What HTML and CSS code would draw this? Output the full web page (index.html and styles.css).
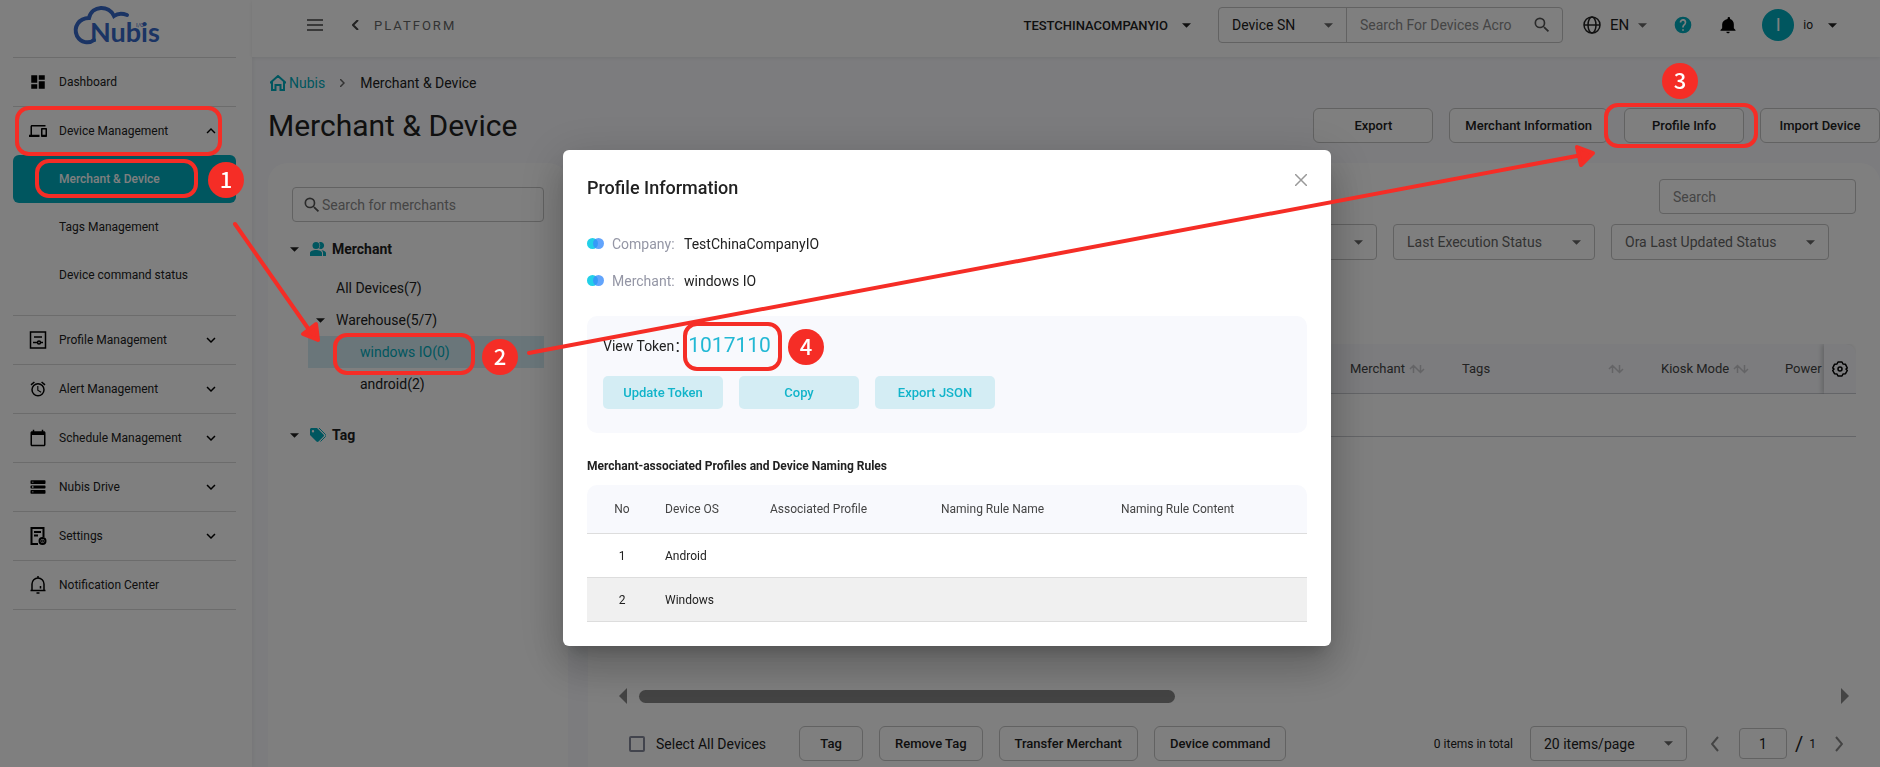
FILE: index.html
```html
<!DOCTYPE html>
<html lang="en">
<head>
    <meta charset="UTF-8">
    <meta name="viewport" content="width=device-width, initial-scale=1.0">
    <title>Nubis - Merchant &amp; Device</title>
    <link rel="stylesheet" href="styles.css">
</head>
<body>
    <!-- shared icons -->
    <svg class="defs" width="0" height="0" aria-hidden="true">
        <symbol id="caret" viewBox="0 0 10 5"><path d="M0 0h10L5 5z"/></symbol>
        <symbol id="chevron-down" viewBox="0 0 24 24"><path d="M7.41 8.59 12 13.17l4.59-4.58L18 10l-6 6-6-6z"/></symbol>
        <symbol id="search" viewBox="0 0 24 24"><path d="M15.5 14h-.79l-.28-.27A6.47 6.47 0 0 0 16 9.5 6.5 6.5 0 1 0 9.5 16c1.61 0 3.09-.59 4.23-1.57l.27.28v.79l5 4.99L20.49 19zm-6 0a4.5 4.5 0 1 1 0-9 4.5 4.5 0 0 1 0 9z"/></symbol>
        <symbol id="sort" viewBox="0 0 16 10"><path d="M4.500 9V1.500M1 5l3.500-3.500L8 5M11.500 1v7.500M8 5l3.500 3.500L15 5" fill="none" stroke="currentColor" stroke-width="1.500"/></symbol>
        <symbol id="circles" viewBox="0 0 17 11"><circle cx="5.500" cy="5.500" r="5.500" fill="#22d0e8"/><circle cx="11.500" cy="5.500" r="5.500" fill="#3b8dfb" fill-opacity=".8"/></symbol>
    </svg>

    <div class="app">
        <aside class="sidebar">
            <div class="logo">
                <svg width="110" height="57" viewBox="0 0 110 57" role="img" aria-label="Nubis I/O">
                    <path d="M33 40C28 44 20 43 16 36 12 27 18 18 28 18 31 5 48 5 53 16c4-3 8-3 13-1" class="logo-cloud"/>
                    <text x="29" y="42" class="logo-name">Nubis</text>
                    <text x="75" y="27" class="logo-io">I/O</text>
                </svg>
            </div>
            <nav>
                <a class="nav-item" href="#">
                    <svg class="nav-icon" viewBox="0 0 24 24"><path d="M3 13h8V3H3zm0 8h8v-6H3zm10 0h8V11h-8zm0-18v6h8V3z"/></svg>
                    <span>Dashboard</span>
                </a>
                <a class="nav-item open" href="#">
                    <svg class="nav-icon" viewBox="0 0 24 24"><path d="M4 6h18V4H4c-1.100 0-2 .9-2 2v11H0v3h14v-3H4zm19 2h-6c-.55 0-1 .45-1 1v10c0 .55.45 1 1 1h6c.55 0 1-.45 1-1V9c0-.55-.45-1-1-1zm-1 9h-4v-7h4z"/></svg>
                    <span>Device Management</span>
                    <svg class="nav-arrow up" viewBox="0 0 24 24"><use href="#chevron-down"/></svg>
                </a>
                <div class="submenu">
                    <a class="active" href="#">Merchant &amp; Device</a>
                    <a href="#">Tags Management</a>
                    <a href="#">Device command status</a>
                </div>
                <a class="nav-item" href="#">
                    <svg class="nav-icon line" viewBox="0 0 18 18"><path d="M1.500 1h15v16h-15zM5 6h8M4 11.500h4M12 11.500h2"/><circle cx="10" cy="11.500" r="1.500"/></svg>
                    <span>Profile Management</span>
                    <svg class="nav-arrow" viewBox="0 0 24 24"><use href="#chevron-down"/></svg>
                </a>
                <a class="nav-item" href="#">
                    <svg class="nav-icon" viewBox="0 0 24 24"><path d="m22 5.720-4.600-3.860-1.290 1.530 4.600 3.860zM7.880 3.390 6.600 1.860 2 5.710l1.290 1.530zM12.500 8H11v6l4.750 2.850.75-1.230-4-2.370zM12 4a9 9 0 1 0 0 18 9 9 0 0 0 0-18zm0 16a7 7 0 1 1 0-14 7 7 0 0 1 0 14z"/></svg>
                    <span>Alert Management</span>
                    <svg class="nav-arrow" viewBox="0 0 24 24"><use href="#chevron-down"/></svg>
                </a>
                <a class="nav-item" href="#">
                    <svg class="nav-icon" viewBox="0 0 24 24"><path d="M20 3h-1V1h-2v2H7V1H5v2H4c-1.100 0-2 .9-2 2v16c0 1.100.9 2 2 2h16c1.100 0 2-.9 2-2V5c0-1.100-.9-2-2-2zm0 18H4V8h16z"/></svg>
                    <span>Schedule Management</span>
                    <svg class="nav-arrow" viewBox="0 0 24 24"><use href="#chevron-down"/></svg>
                </a>
                <a class="nav-item" href="#">
                    <svg class="nav-icon" viewBox="0 0 24 24"><path fill-rule="evenodd" d="M3 3h18a1 1 0 0 1 1 1v3a1 1 0 0 1-1 1H3a1 1 0 0 1-1-1V4a1 1 0 0 1 1-1zm1 2v1h2V5zM3 10h18a1 1 0 0 1 1 1v2a1 1 0 0 1-1 1H3a1 1 0 0 1-1-1v-2a1 1 0 0 1 1-1zm1 1v2h2v-2zM3 16h18a1 1 0 0 1 1 1v3a1 1 0 0 1-1 1H3a1 1 0 0 1-1-1v-3a1 1 0 0 1 1-1zm1 2v1h2v-1z"/></svg>
                    <span>Nubis Drive</span>
                    <svg class="nav-arrow" viewBox="0 0 24 24"><use href="#chevron-down"/></svg>
                </a>
                <a class="nav-item" href="#">
                    <svg class="nav-icon line heavy" viewBox="0 0 18 18"><path d="M9 17H2.500V1h12v9M5 5h7M5 8.500h4"/><circle cx="13.500" cy="14" r="3"/><circle cx="13.500" cy="14" r=".5"/></svg>
                    <span>Settings</span>
                    <svg class="nav-arrow" viewBox="0 0 24 24"><use href="#chevron-down"/></svg>
                </a>
                <a class="nav-item" href="#">
                    <svg class="nav-icon line" viewBox="0 0 18 18"><path d="M1.500 14.500h15M3 14V8a6 6 0 0 1 12 0v6M9 0v2M7.500 17h3M11.500 10v2.500"/></svg>
                    <span>Notification Center</span>
                </a>
            </nav>
        </aside>

        <div class="main">
            <header class="topbar">
                <button class="icon-btn menu-btn" aria-label="Menu"><svg width="16" height="12" viewBox="0 0 16 12"><path d="M0 1h16M0 6h16M0 11h16" stroke="currentColor" stroke-width="1.500"/></svg></button>
                <button class="icon-btn back-btn" aria-label="Back"><svg width="8" height="10" viewBox="0 0 8 10"><path d="M6 0 1 5l5 5" fill="none" stroke="currentColor" stroke-width="2"/></svg></button>
                <span class="platform">PLATFORM</span>
                <button class="icon-btn company">TESTCHINACOMPANYIO <svg class="caret"><use href="#caret"/></svg></button>
                <div class="device-search">
                    <div class="select-wrap">
                        <select aria-label="Search field"><option>Device SN</option></select>
                        <svg class="caret"><use href="#caret"/></svg>
                    </div>
                    <input type="text" aria-label="Search devices" placeholder="Search For Devices Across">
                    <svg class="search-icon"><use href="#search"/></svg>
                </div>
                <button class="icon-btn lang">
                    <svg width="18" height="18" viewBox="0 0 18 18"><g fill="none" stroke="currentColor" stroke-width="1.500"><circle cx="9" cy="9" r="8"/><ellipse cx="9" cy="9" rx="4" ry="8"/><path d="M1 9h16"/></g></svg>
                    EN <svg class="caret"><use href="#caret"/></svg>
                </button>
                <button class="icon-btn help" aria-label="Help"><svg width="20" height="20" viewBox="0 0 24 24"><path d="M12 2a10 10 0 1 0 0 20 10 10 0 0 0 0-20zm1 17h-2v-2h2zm2.070-7.750-.9.920C13.450 12.900 13 13.500 13 15h-2v-.5c0-1.100.45-2.100 1.170-2.830l1.240-1.260c.37-.36.59-.86.59-1.410a2 2 0 0 0-4 0H8a4 4 0 1 1 7.070 2.250z"/></svg></button>
                <button class="icon-btn bell" aria-label="Notifications"><svg width="20" height="20" viewBox="0 0 24 24"><path d="M12 22c1.100 0 2-.9 2-2h-4a2 2 0 0 0 2 2zm7-6v-5c0-3.070-1.640-5.640-4.500-6.320V4a1.500 1.500 0 0 0-3 0v.68C7.630 5.360 5 7.920 5 11v5l-2 2v1h18v-1z"/></svg></button>
                <button class="icon-btn user"><span class="avatar">I</span> io <svg class="caret"><use href="#caret"/></svg></button>
            </header>

            <div class="content">
                <div class="breadcrumb">
                    <a href="#"><svg width="16" height="16" viewBox="0 0 16 16"><path d="M0 8l8-7 8 7M2 6v9h3.500v-5h5v5H14V6" fill="none" stroke="currentColor" stroke-width="2"/></svg>Nubis</a>
                    <svg class="crumb-sep" width="5" height="8" viewBox="0 0 5 8"><path d="M0 0l4 4-4 4" fill="none" stroke="currentColor" stroke-width="1.500"/></svg>
                    <span>Merchant &amp; Device</span>
                </div>

                <div class="title-row">
                    <h1>Merchant &amp; Device</h1>
                    <div class="actions">
                        <button class="btn">Export</button>
                        <button class="btn">Merchant Information</button>
                        <button class="btn">Profile Info</button>
                        <button class="btn">Import Device</button>
                    </div>
                </div>

                <div class="panels">
                    <section class="panel tree-panel">
                        <div class="merchant-search">
                            <svg class="search-icon"><use href="#search"/></svg>
                            <input type="text" aria-label="Search for merchants" placeholder="Search for merchants">
                        </div>
                        <ul class="tree">
                            <li>
                                <div class="tree-head">
                                    <svg class="caret"><use href="#caret"/></svg>
                                    <svg class="tree-icon" viewBox="0 0 16 14"><circle cx="6" cy="3.500" r="3.500"/><path d="M9 .4a3.500 3.500 0 1 1 0 6.200 5 5 0 0 0 0-6.200zM0 14v-3c0-2 3-3 6-3s6 1 6 3v3zM13 14v-3c0-1-.5-2-1.500-2.800 2.500.3 4.500 1.300 4.500 2.800v3z"/></svg>
                                    Merchant
                                </div>
                                <ul>
                                    <li class="leaf">All Devices(7)</li>
                                    <li class="leaf"><svg class="caret"><use href="#caret"/></svg>Warehouse(5/7)</li>
                                    <li class="leaf deep selected">windows IO(0)</li>
                                    <li class="leaf deep">android(2)</li>
                                </ul>
                            </li>
                            <li>
                                <div class="tree-head">
                                    <svg class="caret"><use href="#caret"/></svg>
                                    <svg class="tree-icon" viewBox="0 0 16 14"><path fill-rule="evenodd" d="M0 1.500C0 .7.700 0 1.500 0H7l6.500 6.500c.6.600.6 1.400 0 2L8.500 13.500c-.6.600-1.400.6-2 0L0 7zM3 2a1.200 1.200 0 1 0 0 2.400A1.200 1.200 0 0 0 3 2z"/><path d="M9 0l6.300 6.300c.8.800.8 1.700 0 2.400L10.500 13.500" fill="none" stroke="currentColor"/></svg>
                                    Tag
                                </div>
                            </li>
                        </ul>
                    </section>

                    <section class="panel device-panel">
                        <input class="table-search" type="text" aria-label="Search" placeholder="Search">
                        <div class="filters">
                            <div class="select-wrap"><select aria-label="Filter"><option></option></select><svg class="caret"><use href="#caret"/></svg></div>
                            <div class="select-wrap"><select aria-label="Last Execution Status"><option>Last Execution Status</option></select><svg class="caret"><use href="#caret"/></svg></div>
                            <div class="select-wrap wide"><select aria-label="Ora Last Updated Status"><option>Ora Last Updated Status</option></select><svg class="caret"><use href="#caret"/></svg></div>
                        </div>
                        <table class="device-table">
                            <colgroup><col><col class="c-merchant"><col class="c-tags"><col class="c-kiosk"><col class="c-power"><col class="c-gear"></colgroup>
                            <thead>
                                <tr>
                                    <th></th>
                                    <th><div>Merchant <svg class="sort"><use href="#sort"/></svg></div></th>
                                    <th><div class="spread">Tags <svg class="sort"><use href="#sort"/></svg></div></th>
                                    <th><div>Kiosk Mode <svg class="sort"><use href="#sort"/></svg></div></th>
                                    <th><div>Power</div></th>
                                    <th class="gear"><button class="icon-btn" aria-label="Columns"><svg width="16" height="16" viewBox="0 0 16 16"><path d="M6 1h4l1 2 2.500.3L15.300 7 14 8l1.300 1.500-1.800 3.200L11 13l-1 2H6l-1-2-2.500-.3L.7 9.500 2 8 .7 7l1.800-3.700L5 3z" fill="none" stroke="currentColor" stroke-width="1.500" stroke-linejoin="round"/><circle cx="8" cy="8" r="2" fill="none" stroke="currentColor" stroke-width="1.500"/></svg></button></th>
                                </tr>
                            </thead>
                            <tbody>
                                <tr><td colspan="6"></td></tr>
                            </tbody>
                        </table>

                        <div class="scrollbar">
                            <svg width="8" height="16" viewBox="0 0 8 16"><path d="M8 0v16L0 8z"/></svg>
                            <div class="track"><div class="thumb"></div></div>
                            <svg width="8" height="16" viewBox="0 0 8 16"><path d="M0 0v16l8-8z"/></svg>
                        </div>
                        <div class="table-footer">
                            <label class="select-all"><input type="checkbox"> Select All Devices</label>
                            <button class="btn small">Tag</button>
                            <button class="btn small">Remove Tag</button>
                            <button class="btn small">Transfer Merchant</button>
                            <button class="btn small">Device command</button>
                            <div class="pager">
                                <span>0 items in total</span>
                                <div class="select-wrap"><select aria-label="Items per page"><option>20 items/page</option></select><svg class="caret"><use href="#caret"/></svg></div>
                                <button class="icon-btn page-btn" aria-label="Previous page"><svg width="8" height="16" viewBox="0 0 8 16"><path d="M7 1 1 8l6 7" fill="none" stroke="currentColor" stroke-width="2"/></svg></button>
                                <input type="text" aria-label="Page" value="1">
                                <span class="slash">/</span>
                                <span class="pages">1</span>
                                <button class="icon-btn page-btn" aria-label="Next page"><svg width="8" height="16" viewBox="0 0 8 16"><path d="M1 1l6 7-6 7" fill="none" stroke="currentColor" stroke-width="2"/></svg></button>
                            </div>
                        </div>
                    </section>
                </div>
            </div>
        </div>
    </div>

    <div class="overlay">
        <div class="modal" role="dialog" aria-labelledby="modal-title">
            <div class="modal-head">
                <h2 id="modal-title">Profile Information</h2>
                <button class="icon-btn close" aria-label="Close"><svg width="12" height="12" viewBox="0 0 12 12"><path d="M0 0l12 12M12 0 0 12" stroke="currentColor" stroke-width="1.500"/></svg></button>
            </div>
            <dl class="info">
                <div><svg width="17" height="11"><use href="#circles"/></svg><dt>Company:</dt><dd>TestChinaCompanyIO</dd></div>
                <div><svg width="17" height="11"><use href="#circles"/></svg><dt>Merchant:</dt><dd>windows IO</dd></div>
            </dl>
            <div class="token-box">
                <div class="token-line"><span>View Token：</span><span class="token">1017110</span></div>
                <div class="token-actions">
                    <button>Update Token</button>
                    <button>Copy</button>
                    <button>Export JSON</button>
                </div>
            </div>
            <h3>Merchant-associated Profiles and Device Naming Rules</h3>
            <table class="rules">
                <colgroup><col class="r-no"><col class="r-os"><col class="r-profile"><col class="r-name"><col></colgroup>
                <thead>
                    <tr><th>No</th><th>Device OS</th><th>Associated Profile</th><th>Naming Rule Name</th><th>Naming Rule Content</th></tr>
                </thead>
                <tbody>
                    <tr><td>1</td><td>Android</td><td></td><td></td><td></td></tr>
                    <tr><td>2</td><td>Windows</td><td></td><td></td><td></td></tr>
                </tbody>
            </table>
        </div>
    </div>

    <!-- walkthrough marks: boxes, arrows and step numbers -->
    <svg class="marks" width="1880" height="767" viewBox="0 0 1880 767">
        <g class="mark-box">
            <rect x="17" y="108" width="203" height="46" rx="12"/>
            <rect x="37" y="161" width="159" height="35" rx="12"/>
            <rect x="335" y="335" width="138" height="38" rx="12"/>
            <rect x="1606" y="105" width="150" height="41" rx="12"/>
            <rect x="685" y="324" width="95" height="45" rx="12"/>
        </g>
        <g class="mark-arrow">
            <path d="M235 224 312 334"/>
            <path d="M529 353 1582 155"/>
        </g>
        <g class="mark-head">
            <path d="M303 334 316 324 318 340z"/>
            <path d="M1577 147 1593 153 1581 165z"/>
        </g>
        <g class="mark-step">
            <circle cx="226" cy="180" r="18"/><text x="226" y="188">1</text>
            <circle cx="500" cy="357" r="18"/><text x="500" y="365">2</text>
            <circle cx="1680" cy="81" r="18"/><text x="1680" y="89">3</text>
            <circle cx="806" cy="347" r="18"/><text x="806" y="355">4</text>
        </g>
    </svg>
</body>
</html>
```

FILE: styles.css
```css
* {
    box-sizing: border-box;
}
body {
    margin: 0;
    font-family: Roboto, "Noto Sans CJK SC", sans-serif;
    font-size: 14px;
    color: #212121;
    background-color: #f8f9fc;
}
a {
    color: inherit;
    text-decoration: none;
}
button,
input,
select {
    font-family: inherit;
    font-size: 14px;
    color: inherit;
}
input::placeholder {
    color: #8a8a8a;
    opacity: 1;
}
ul {
    list-style: none;
    margin: 0;
    padding: 0;
}
.defs {
    position: absolute;
}
.icon-btn {
    display: flex;
    align-items: center;
    padding: 0;
    border: none;
    background: none;
    cursor: pointer;
}
.caret {
    width: 9px;
    height: 5px;
    flex: none;
    fill: currentColor;
}
.search-icon {
    width: 20px;
    height: 20px;
    flex: none;
    fill: #555;
}
.app {
    display: flex;
    min-height: 100vh;
}

/* sidebar */
.sidebar {
    width: 252px;
    flex: none;
    padding: 0 16px 0 13px;
    background-color: #fff;
    box-shadow: 1px 0 4px rgba(0, 0, 0, 0.06);
}
.logo {
    height: 58px;
    padding-left: 48px;
    border-bottom: 1px solid #d8d8d8;
}
.logo svg {
    display: block;
    fill: #3668c8;
}
.logo-cloud {
    fill: none;
    stroke: #3668c8;
    stroke-width: 4;
    stroke-linecap: round;
}
.logo-name {
    font-family: Lato, sans-serif;
    font-weight: 700;
    font-size: 27px;
}
.logo-io {
    font-size: 6px;
}
.nav-item {
    display: flex;
    align-items: center;
    gap: 12px;
    height: 49px;
    padding: 0 16px;
    font-size: 12px;
    border-bottom: 1px solid #d8d8d8;
}
.nav-item.open {
    border-bottom: none;
    height: 48px;
}
.nav-icon {
    width: 18px;
    height: 18px;
    fill: #000;
}
.nav-icon.line {
    fill: none;
    stroke: #000;
    stroke-width: 1.5;
}
.nav-icon.heavy {
    stroke-width: 2;
}
.nav-arrow {
    width: 18px;
    height: 18px;
    margin-left: auto;
}
.nav-arrow.up {
    transform: rotate(180deg);
}
.submenu {
    padding-bottom: 16px;
    border-bottom: 1px solid #d8d8d8;
}
.submenu a {
    display: flex;
    align-items: center;
    height: 48px;
    padding-left: 46px;
    font-size: 12px;
    border-radius: 6px;
}
.submenu a.active {
    color: #fff;
    font-weight: 500;
    background-color: #00acbe;
}

/* top bar */
.main {
    flex: 1;
    min-width: 0;
    display: flex;
    flex-direction: column;
}
.topbar {
    display: flex;
    align-items: center;
    height: 57px;
    padding: 0 43px 7px 55px;
    background-color: #fff;
    box-shadow: 0 1px 4px rgba(0, 0, 0, 0.08);
}
.menu-btn {
    margin-right: 29px;
    color: #444;
}
.back-btn {
    color: #444;
}
.platform {
    margin-left: 14px;
    font-size: 13px;
    letter-spacing: 2px;
    color: #666;
}
.company {
    gap: 14px;
    margin-left: auto;
    font-size: 13px;
    font-weight: 500;
}
.device-search {
    display: flex;
    align-items: center;
    width: 345px;
    height: 36px;
    margin: 0 20px 0 27px;
    padding-right: 10px;
    border: 1px solid #c4c4c4;
    border-radius: 4px;
}
.device-search .select-wrap {
    width: 128px;
    height: 34px;
    border: none;
    border-right: 1px solid #c4c4c4;
    border-radius: 0;
}
.device-search input {
    flex: 1;
    min-width: 0;
    margin: 0 20px 0 13px;
    padding: 0;
    border: none;
    background: none;
}
.select-wrap {
    display: flex;
    align-items: center;
    height: 36px;
    padding-right: 13px;
    border: 1px solid #c4c4c4;
    border-radius: 4px;
    color: #666;
}
.select-wrap select {
    flex: 1;
    min-width: 0;
    padding: 0 0 0 13px;
    border: none;
    background: none;
    appearance: none;
}
.device-search select,
.pager select {
    color: #212121;
}
.lang {
    gap: 9px;
    margin-right: 26px;
    font-size: 15px;
}
.lang .caret {
    color: #666;
}
.help {
    margin-right: 25px;
    fill: #00acbe;
}
.bell {
    margin-right: 24px;
}
.user {
    gap: 9px;
    font-size: 12px;
}
.user .caret {
    margin-left: 6px;
}
.avatar {
    width: 32px;
    height: 32px;
    border-radius: 50%;
    font-size: 18px;
    line-height: 32px;
    text-align: center;
    color: #fff;
    background-color: #00acbe;
}

/* page content */
.content {
    flex: 1;
    display: flex;
    flex-direction: column;
    padding: 14px 0 0 16px;
}
.breadcrumb {
    display: flex;
    align-items: center;
    gap: 15px;
    height: 24px;
}
.breadcrumb a {
    display: flex;
    align-items: center;
    gap: 3px;
    padding-left: 2px;
    color: #00acbe;
}
.crumb-sep {
    color: #666;
}
.title-row {
    display: flex;
    align-items: center;
    justify-content: space-between;
    height: 35px;
    margin: 13px 0 20px;
}
h1 {
    margin: 0;
    font-size: 30px;
    font-weight: 400;
    line-height: 38px;
}
.actions {
    display: flex;
    gap: 16px;
}
.btn {
    min-width: 120px;
    height: 35px;
    padding: 0 15px;
    border: 1px solid #c4c4c4;
    border-radius: 6px;
    font-size: 13px;
    font-weight: 500;
    background-color: #fff;
    cursor: pointer;
}
.btn.small {
    min-width: 64px;
}
.panels {
    flex: 1;
    display: flex;
    gap: 20px;
}
.panel {
    border-radius: 20px 20px 0 0;
    background-color: #fff;
}
.tree-panel {
    width: 300px;
    flex: none;
    padding: 24px;
}
.merchant-search {
    display: flex;
    align-items: center;
    height: 35px;
    padding-left: 9px;
    border: 1px solid #c4c4c4;
    border-radius: 4px;
}
.merchant-search input {
    flex: 1;
    min-width: 0;
    padding: 0;
    border: none;
    background: none;
}
.tree {
    margin-top: 11px;
}
.tree ul {
    margin: 7px 0 19px;
}
.tree-head {
    display: flex;
    align-items: center;
    height: 32px;
    margin-left: -2px;
    font-weight: 700;
}
.tree-icon {
    width: 16px;
    height: 14px;
    margin: 0 6px 0 11px;
    fill: #00acbe;
    color: #00acbe;
}
.leaf {
    position: relative;
    height: 32px;
    margin-left: 16px;
    padding-left: 28px;
    line-height: 32px;
}
.leaf .caret {
    position: absolute;
    left: 8px;
    top: 14px;
}
.leaf.deep {
    padding-left: 52px;
}
.leaf.selected {
    color: #00acbe;
    background-color: #d4edf4;
}

/* device list */
.device-panel {
    flex: 1;
    min-width: 0;
    display: flex;
    flex-direction: column;
    padding: 16px 24px 6px;
}
.table-search {
    align-self: flex-end;
    width: 197px;
    height: 35px;
    padding: 0 13px;
    border: 1px solid #c4c4c4;
    border-radius: 4px;
    background: none;
}
.filters {
    display: flex;
    justify-content: flex-end;
    gap: 16px;
    margin: 10px 27px 84px 0;
}
.filters .select-wrap {
    width: 202px;
}
.filters .select-wrap.wide {
    width: 218px;
}
.device-table {
    width: 100%;
    table-layout: fixed;
    border-collapse: separate;
    border-spacing: 0;
    font-size: 13px;
}
.device-table th {
    height: 50px;
    padding: 0 0 0 16px;
    border-bottom: 1px solid #c9cbd0;
    font-weight: 400;
    text-align: left;
    color: #444;
    background-color: #f8f9fc;
}
.device-table th div {
    display: flex;
    align-items: center;
    gap: 4px;
}
.device-table th .spread {
    justify-content: space-between;
    padding-right: 21px;
}
.device-table th.gear {
    padding-left: 8px;
    border-radius: 0 10px 0 0;
    color: #000;
    box-shadow: -2px 0 5px rgba(0, 0, 0, 0.2);
    clip-path: inset(0 0 0 -8px);
}
.device-table td {
    height: 43px;
    border-bottom: 1px solid #c9cbd0;
}
.c-merchant {
    width: 112px;
}
.c-tags {
    width: 199px;
}
.c-kiosk {
    width: 124px;
}
.c-power {
    width: 55px;
}
.c-gear {
    width: 32px;
}
.sort {
    width: 16px;
    height: 10px;
    color: #c8c8cc;
}
.scrollbar {
    display: flex;
    align-items: center;
    gap: 12px;
    margin: auto 7px 22px;
    fill: #888;
}
.track {
    flex: 1;
}
.thumb {
    width: 45%;
    height: 13px;
    border-radius: 7px;
    background-color: #888;
}
.table-footer {
    display: flex;
    align-items: center;
    gap: 16px;
    padding-left: 17px;
}
.select-all {
    display: flex;
    align-items: center;
    gap: 11px;
    margin-right: 17px;
}
.select-all input {
    appearance: none;
    width: 16px;
    height: 16px;
    margin: 0;
    border: 2px solid #84889a;
    border-radius: 2px;
}
.pager {
    display: flex;
    align-items: center;
    margin-left: auto;
    margin-right: 13px;
    font-size: 12px;
}
.pager .select-wrap {
    width: 157px;
    height: 35px;
    margin: 0 24px 0 17px;
}
.pager input {
    width: 48px;
    height: 31px;
    margin: 0 8px 0 20px;
    border: 1px solid #c4c4c4;
    border-radius: 4px;
    text-align: center;
    background: none;
}
.page-btn {
    color: #888;
}
.slash {
    font-size: 20px;
}
.pages {
    margin: 0 19px 0 6px;
}

/* modal */
.overlay {
    position: fixed;
    inset: 0;
    display: flex;
    align-items: flex-start;
    justify-content: center;
    padding: 150px 0 0 14px;
    background-color: rgba(0, 0, 0, 0.5);
}
.modal {
    width: 768px;
    padding: 16px 24px 24px;
    border-radius: 6px;
    background-color: #fff;
    box-shadow: 0 11px 15px -7px rgba(0, 0, 0, 0.2), 0 24px 38px 3px rgba(0, 0, 0, 0.14), 0 9px 46px 8px rgba(0, 0, 0, 0.12);
}
.modal-head {
    display: flex;
    justify-content: space-between;
    height: 57px;
}
h2 {
    margin: 0;
    font-size: 18px;
    font-weight: 500;
    line-height: 44px;
}
.close {
    align-self: flex-start;
    padding: 8px 0;
    color: #999;
}
.info {
    margin: 0 0 17px;
}
.info div {
    display: flex;
    align-items: center;
    height: 37px;
}
.info div:first-child {
    margin-top: 2px;
}
.info dt {
    width: 72px;
    margin-left: 8px;
    color: #9496a5;
}
.info dd {
    margin: 0;
}
.token-box {
    height: 117px;
    padding: 12px 16px;
    border-radius: 10px;
    background-color: #f8f9fd;
}
.token-line {
    display: flex;
    align-items: center;
    height: 34px;
}
.token {
    font-size: 21px;
    color: #22b8d4;
}
.token-actions {
    display: flex;
    gap: 16px;
    margin-top: 14px;
}
.token-actions button {
    width: 120px;
    height: 33px;
    border: none;
    border-radius: 5px;
    font-size: 13px;
    font-weight: 500;
    color: #12b4ca;
    background-color: #d4edf4;
    cursor: pointer;
}
h3 {
    margin: 24px 0 10px;
    font-size: 12px;
    font-weight: 700;
    line-height: 18px;
}
.rules {
    width: 100%;
    table-layout: fixed;
    border-collapse: separate;
    border-spacing: 0;
    font-size: 12px;
}
.rules th,
.rules td {
    height: 44px;
    padding: 0 0 0 16px;
    border-bottom: 1px solid #ddd;
    font-weight: 400;
    text-align: left;
}
.rules th {
    height: 49px;
    color: #444;
    background-color: #f8f9fd;
}
.rules th:first-child,
.rules td:first-child {
    padding: 0 0 0 8px;
    text-align: center;
}
.rules th:first-child {
    border-radius: 10px 0 0 0;
}
.rules th:last-child {
    border-radius: 0 10px 0 0;
}
.rules tr:nth-child(2) td {
    background-color: #f0f0f0;
}
.r-no {
    width: 62px;
}
.r-os {
    width: 105px;
}
.r-profile {
    width: 171px;
}
.r-name {
    width: 180px;
}

/* walkthrough marks */
.marks {
    position: absolute;
    left: 0;
    top: 0;
    pointer-events: none;
}
.mark-box {
    fill: none;
    stroke: #f52d26;
    stroke-width: 4;
}
.mark-arrow {
    stroke: #f52d26;
    stroke-width: 4;
    stroke-linecap: round;
}
.mark-head {
    fill: #f52d26;
    stroke: #f52d26;
    stroke-width: 4;
    stroke-linejoin: round;
}
.mark-step {
    fill: #f52d26;
}
.mark-step text {
    font-family: "Noto Sans CJK SC", sans-serif;
    font-size: 22px;
    font-weight: 500;
    text-anchor: middle;
    fill: #fff;
}
```
